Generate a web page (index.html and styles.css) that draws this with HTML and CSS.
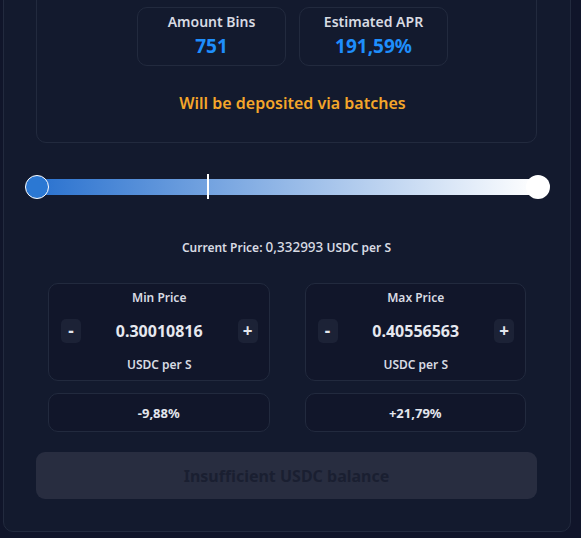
FILE: index.html
```html
<!DOCTYPE html>
<html lang="en">
<head>
    <meta charset="UTF-8">
    <meta name="viewport" content="width=device-width, initial-scale=1.0">
    <title>Add Liquidity</title>
    <link rel="stylesheet" href="styles.css">
</head>
<body>
    <div class="panel">
        <div class="summary">
            <div class="stats">
                <div class="stat">
                    <div class="stat-label">Amount Bins</div>
                    <div class="stat-value">751</div>
                </div>
                <div class="stat">
                    <div class="stat-label">Estimated APR</div>
                    <div class="stat-value">191,59%</div>
                </div>
            </div>
            <p class="notice">Will be deposited via batches</p>
        </div>

        <div class="slider">
            <div class="track"></div>
            <span class="marker"></span>
            <span class="thumb thumb-min"></span>
            <span class="thumb thumb-max"></span>
        </div>

        <p class="current-price">Current Price: <span class="current-value">0,332993</span> USDC per S</p>

        <div class="range">
            <div class="range-col">
                <div class="price-box">
                    <div class="price-label">Min Price</div>
                    <div class="price-controls">
                        <button class="step">-</button>
                        <span class="price-value">0.30010816</span>
                        <button class="step">+</button>
                    </div>
                    <div class="price-label unit">USDC per S</div>
                </div>
                <div class="pct-box">-9,88%</div>
            </div>
            <div class="range-col">
                <div class="price-box">
                    <div class="price-label">Max Price</div>
                    <div class="price-controls">
                        <button class="step">-</button>
                        <span class="price-value">0.40556563</span>
                        <button class="step">+</button>
                    </div>
                    <div class="price-label unit">USDC per S</div>
                </div>
                <div class="pct-box">+21,79%</div>
            </div>
        </div>

        <button class="submit" disabled>Insufficient USDC balance</button>
    </div>
</body>
</html>
```

FILE: styles.css
```css
body {
    margin: 0;
    background-color: #10152a;
    font-family: "Noto Sans", "Open Sans", sans-serif;
    color: #e3e6ee;
    overflow: hidden;
}
.panel {
    width: 568px;
    box-sizing: border-box;
    margin: -60px 0 0 3px;
    padding: 32px 33px 32px 32px;
    background-color: #131a2e;
    border: 1px solid #222a3e;
    border-radius: 10px;
}
.summary {
    border: 1px solid #222a3e;
    border-radius: 10px;
    padding: 33px 0 28px 12px;
}
.stats {
    display: flex;
    justify-content: center;
    gap: 13px;
}
.stat {
    width: 149px;
    height: 59px;
    box-sizing: border-box;
    border: 1px solid #222a3e;
    border-radius: 10px;
    text-align: center;
    padding-top: 5px;
}
.stat-label {
    font-size: 14px;
    font-weight: 600;
    line-height: 18px;
    color: #d8dbe3;
}
.stat-value {
    font-size: 19px;
    font-weight: 700;
    line-height: 30px;
    color: #1e8efc;
}
.notice {
    margin: 26px 0 0;
    text-align: center;
    font-size: 16px;
    font-weight: 600;
    line-height: 22px;
    color: #f4a62a;
}
.slider {
    position: relative;
    display: flex;
    align-items: center;
    height: 24px;
    margin-top: 32px;
}
.track {
    flex: 1;
    height: 16px;
    margin-left: 1px;
    background: linear-gradient(to right, #2a72cf, #ffffff);
}
.marker {
    position: absolute;
    left: 171px;
    top: -1px;
    width: 2px;
    height: 25px;
    background-color: #ffffff;
}
.thumb {
    position: absolute;
    top: 0;
    width: 24px;
    height: 24px;
    box-sizing: border-box;
    border-radius: 50%;
}
.thumb-min {
    left: -11px;
    background-color: #2b78d3;
    border: 1.5px solid #ffffff;
}
.thumb-max {
    right: -13px;
    background-color: #ffffff;
}
.current-price {
    margin: 39px 0 0;
    text-align: center;
    font-size: 12px;
    font-weight: 600;
    line-height: 18px;
    color: #d8dbe3;
}
.current-value {
    font-size: 13.5px;
    font-weight: 500;
}
.range {
    display: grid;
    grid-template-columns: 1fr 1fr;
    gap: 35px;
    padding: 0 11px 0 12px;
    margin-top: 26px;
}
.price-box {
    background-color: #11162a;
    border: 1px solid #222a3e;
    border-radius: 10px;
    padding: 6px 11px 7px 12px;
    text-align: center;
}
.price-label {
    font-size: 12px;
    font-weight: 600;
    line-height: 16px;
    color: #d8dbe3;
}
.price-label.unit {
    margin-top: 14px;
}
.price-controls {
    display: flex;
    align-items: center;
    justify-content: space-between;
    margin-top: 13px;
}
.step {
    width: 20px;
    height: 24px;
    padding: 0;
    border: none;
    border-radius: 5px;
    background-color: #1c2236;
    color: #e3e6ee;
    font-family: inherit;
    font-size: 17px;
    font-weight: 700;
    line-height: 24px;
}
.price-value {
    font-size: 16px;
    font-weight: 700;
    color: #e6e8ef;
}
.pct-box {
    margin-top: 12px;
    height: 39px;
    box-sizing: border-box;
    background-color: #11162a;
    border: 1px solid #222a3e;
    border-radius: 10px;
    display: flex;
    align-items: center;
    justify-content: center;
    font-size: 13px;
    font-weight: 700;
    color: #e3e6ee;
}
.submit {
    display: block;
    width: 100%;
    height: 47px;
    margin-top: 20px;
    border: none;
    border-radius: 9px;
    background-color: #282d40;
    color: #1a1f31;
    font-family: inherit;
    font-size: 16px;
    font-weight: 700;
}
```
